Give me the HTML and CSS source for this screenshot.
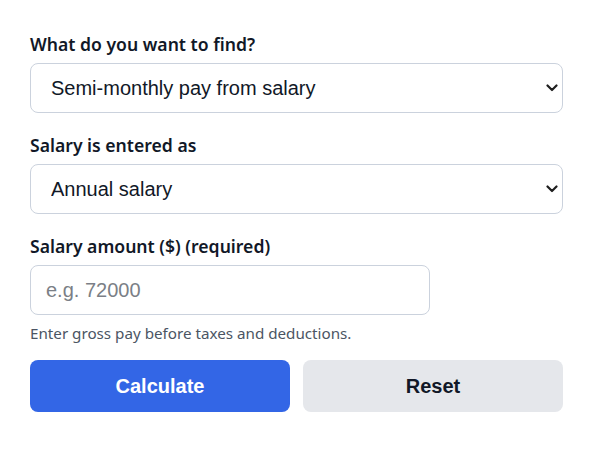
FILE: index.html
```html
<!DOCTYPE html>
<html lang="en">
<head>
<meta charset="utf-8">
<title>Salary calculator</title>
<link rel="stylesheet" href="styles.css">
</head>
<body>
<form class="calc">
  <div class="field">
    <label class="label" for="find">What do you want to find?</label>
    <div class="select-wrap">
      <select id="find" class="control select">
        <option>Semi-monthly pay from salary</option>
      </select>
      <svg class="chevron" width="12" height="8" viewBox="0 0 12 8" aria-hidden="true"><path d="M1.5 1.5 L6 6 L10.5 1.5" fill="none" stroke="#1f1f1f" stroke-width="2.2" stroke-linecap="round" stroke-linejoin="round"/></svg>
    </div>
  </div>
  <div class="field">
    <label class="label" for="entered">Salary is entered as</label>
    <div class="select-wrap">
      <select id="entered" class="control select">
        <option>Annual salary</option>
      </select>
      <svg class="chevron" width="12" height="8" viewBox="0 0 12 8" aria-hidden="true"><path d="M1.5 1.5 L6 6 L10.5 1.5" fill="none" stroke="#1f1f1f" stroke-width="2.2" stroke-linecap="round" stroke-linejoin="round"/></svg>
    </div>
  </div>
  <div class="field field-last">
    <label class="label" for="amount">Salary amount ($) (required)</label>
    <input id="amount" class="control input" type="text" placeholder="e.g. 72000">
    <p class="help">Enter gross pay before taxes and deductions.</p>
  </div>
  <div class="actions">
    <button type="button" class="btn btn-primary">Calculate</button>
    <button type="reset" class="btn btn-secondary">Reset</button>
  </div>
</form>
</body>
</html>
```

FILE: styles.css
```css
html, body {
  margin: 0;
  padding: 0;
  background: #ffffff;
}

.calc {
  width: 533px;
  padding: 32px 30px;
  font-family: "Noto Sans", "Open Sans", sans-serif;
}

.field {
  display: flex;
  flex-direction: column;
  margin-bottom: 20px;
}

.field-last {
  margin-bottom: 17px;
}

.label {
  font-size: 17.6px;
  line-height: 24px;
  font-weight: 600;
  color: #111827;
  margin-bottom: 7px;
}

.control {
  box-sizing: border-box;
  height: 50px;
  border: 1px solid #cbd2dd;
  border-radius: 8px;
  background: #ffffff;
  font-family: "Liberation Sans", Arial, sans-serif;
  font-size: 20px;
  color: #111827;
  margin: 0;
}

.select-wrap {
  position: relative;
  width: 533px;
  height: 50px;
}

.select {
  width: 533px;
  padding: 0 32px 0 20px;
  -webkit-appearance: none;
  appearance: none;
}

.chevron {
  position: absolute;
  right: 5px;
  top: 21px;
  pointer-events: none;
}

.input {
  width: 400px;
  padding: 0 15px;
}

.input::placeholder {
  color: #7b7f86;
}

.help {
  margin: 8px 0 0;
  font-size: 15.2px;
  line-height: 20px;
  color: #4b5563;
}

.actions {
  display: flex;
  gap: 13px;
}

.btn {
  flex: 1;
  height: 52px;
  border: none;
  border-radius: 8px;
  font-family: "Liberation Sans", Arial, sans-serif;
  font-size: 20px;
  font-weight: 700;
  cursor: pointer;
}

.btn-primary {
  background: #3366e6;
  color: #ffffff;
}

.btn-secondary {
  background: #e5e7eb;
  color: #111827;
}
```
